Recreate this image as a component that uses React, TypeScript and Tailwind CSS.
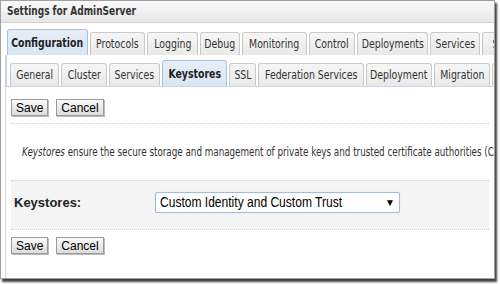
import React from 'react';

const mainTabs = [
    { label: 'Configuration', w: 81, active: true },
    { label: 'Protocols', w: 55 },
    { label: 'Logging', w: 51 },
    { label: 'Debug', w: 40 },
    { label: 'Monitoring', w: 65 },
    { label: 'Control', w: 46 },
    { label: 'Deployments', w: 71 },
    { label: 'Services', w: 50 },
    { label: 'Security', w: 60 },
];

const subTabs = [
    { label: 'General', w: 49 },
    { label: 'Cluster', w: 46 },
    { label: 'Services', w: 51 },
    { label: 'Keystores', w: 65, active: true },
    { label: 'SSL', w: 27 },
    { label: 'Federation Services', w: 106 },
    { label: 'Deployment', w: 66 },
    { label: 'Migration', w: 56 },
    { label: 'Health', w: 50 },
];

const dejavu = { fontFamily: '"DejaVu Sans", sans-serif' };
const arial = { fontFamily: '"Liberation Sans", Arial, sans-serif' };

// the original UI uses a condensed face; squeeze DejaVu to match
function Narrow({ children, left }: { children: React.ReactNode; left?: boolean }) {
    return (
        <span className={`inline-block whitespace-nowrap scale-x-[0.78] ${left ? 'origin-left' : 'origin-center'}`}>
            {children}
        </span>
    );
}

function Tab({ label, w, active }: { label: string; w: number; active?: boolean }) {
    return (
        <div
            style={{ width: w }}
            className={
                active
                    ? 'shrink-0 h-[26px] flex items-center justify-center rounded-t-[3px] border border-b-0 border-[#a9c1db] bg-gradient-to-b from-[#e6eef8] to-[#d8e5f3] text-[12px] font-bold text-[#222]'
                    : 'shrink-0 h-[23px] flex items-center justify-center rounded-t-[3px] border border-b-0 border-[#c9c9c9] bg-gradient-to-b from-[#f6f6f6] to-[#e9e9e9] text-[12px] text-[#333]'
            }
        >
            <Narrow>{label}</Narrow>
        </div>
    );
}

function Buttons() {
    return (
        <div className="flex gap-[8px] text-[12px] text-black" style={arial}>
            <button className="h-[17px] px-[4px] leading-none border border-[#9a9a9a] bg-gradient-to-b from-[#fafafa] to-[#dcdcdc] shadow-[1px_1px_0_#bbb]">Save</button>
            <button className="h-[17px] px-[4px] leading-none border border-[#9a9a9a] bg-gradient-to-b from-[#fafafa] to-[#dcdcdc] shadow-[1px_1px_0_#bbb]">Cancel</button>
        </div>
    );
}

export default function App() {
    return (
        <div className="w-[500px] h-[284px] bg-white overflow-hidden">
            <div className="w-[495px] h-[279px] border border-[#a0a0a0] bg-white shadow-[2px_3px_2px_rgba(0,0,0,0.75)] flex flex-col overflow-hidden" style={dejavu}>
                {/* title bar */}
                <div className="h-[22px] shrink-0 flex items-center pl-[6px] bg-gradient-to-b from-[#fbfbfb] to-[#e7e7e7] border-b border-[#d0d0d0] text-[12.5px] font-bold text-[#333]">
                    <span className="inline-block whitespace-nowrap scale-x-[0.72] origin-left">Settings for AdminServer</span>
                </div>

                {/* main tabs */}
                <div className="mt-[6px] pl-[6px] flex items-end gap-[2px] overflow-hidden">
                    {mainTabs.map(t => <Tab key={t.label} {...t} />)}
                </div>

                {/* sub tab panel */}
                <div className="ml-[4px] border-l-2 border-[#c6d6e8] pt-[5px] flex flex-col">
                    <div className="pl-[3px] flex items-end gap-[2px] overflow-hidden border-b border-[#c6d6e8]">
                        {subTabs.map(t => <Tab key={t.label} {...t} />)}
                    </div>
                </div>

                {/* content */}
                <div className="ml-[4px] border-l border-[#d8d8d8] flex-1 flex flex-col">
                    <div className="pl-[5px] pt-[12px] pb-[7px]">
                        <Buttons />
                    </div>
                    <div className="mx-[5px] border-t border-dotted border-[#cfcfcf]" />
                    <div className="h-[56px] flex items-center pl-[16px] text-[12px] text-[#333] overflow-hidden">
                        <span className="inline-block whitespace-nowrap scale-x-[0.73] origin-left">
                            <i>Keystores</i> ensure the secure storage and management of private keys and trusted certificate authorities (CAs).
                        </span>
                    </div>
                    <div className="mx-[5px] border-t border-dotted border-[#cfcfcf] bg-[#f4f4f4] h-[49px] flex items-start pt-[11px]">
                        <div className="w-[144px] pl-[3px] pt-[1px] text-[13px] font-bold text-[#222]" style={arial}>Keystores:</div>
                        <div className="w-[245px] h-[21px] border border-[#9fbde0] rounded-[2px] bg-white flex items-center justify-between pl-[4px] pr-[4px] text-[14px] text-black shadow-[0_0_1px_#b9d3f0]" style={arial}>
                            <span className="inline-block whitespace-nowrap scale-x-[0.86] origin-left">Custom Identity and Custom Trust</span>
                            <span className="text-[10px]">▼</span>
                        </div>
                    </div>
                    <div className="mx-[5px] border-t border-dotted border-[#cfcfcf]" />
                    <div className="pl-[5px] pt-[7px]">
                        <Buttons />
                    </div>
                </div>
            </div>
        </div>
    );
}
